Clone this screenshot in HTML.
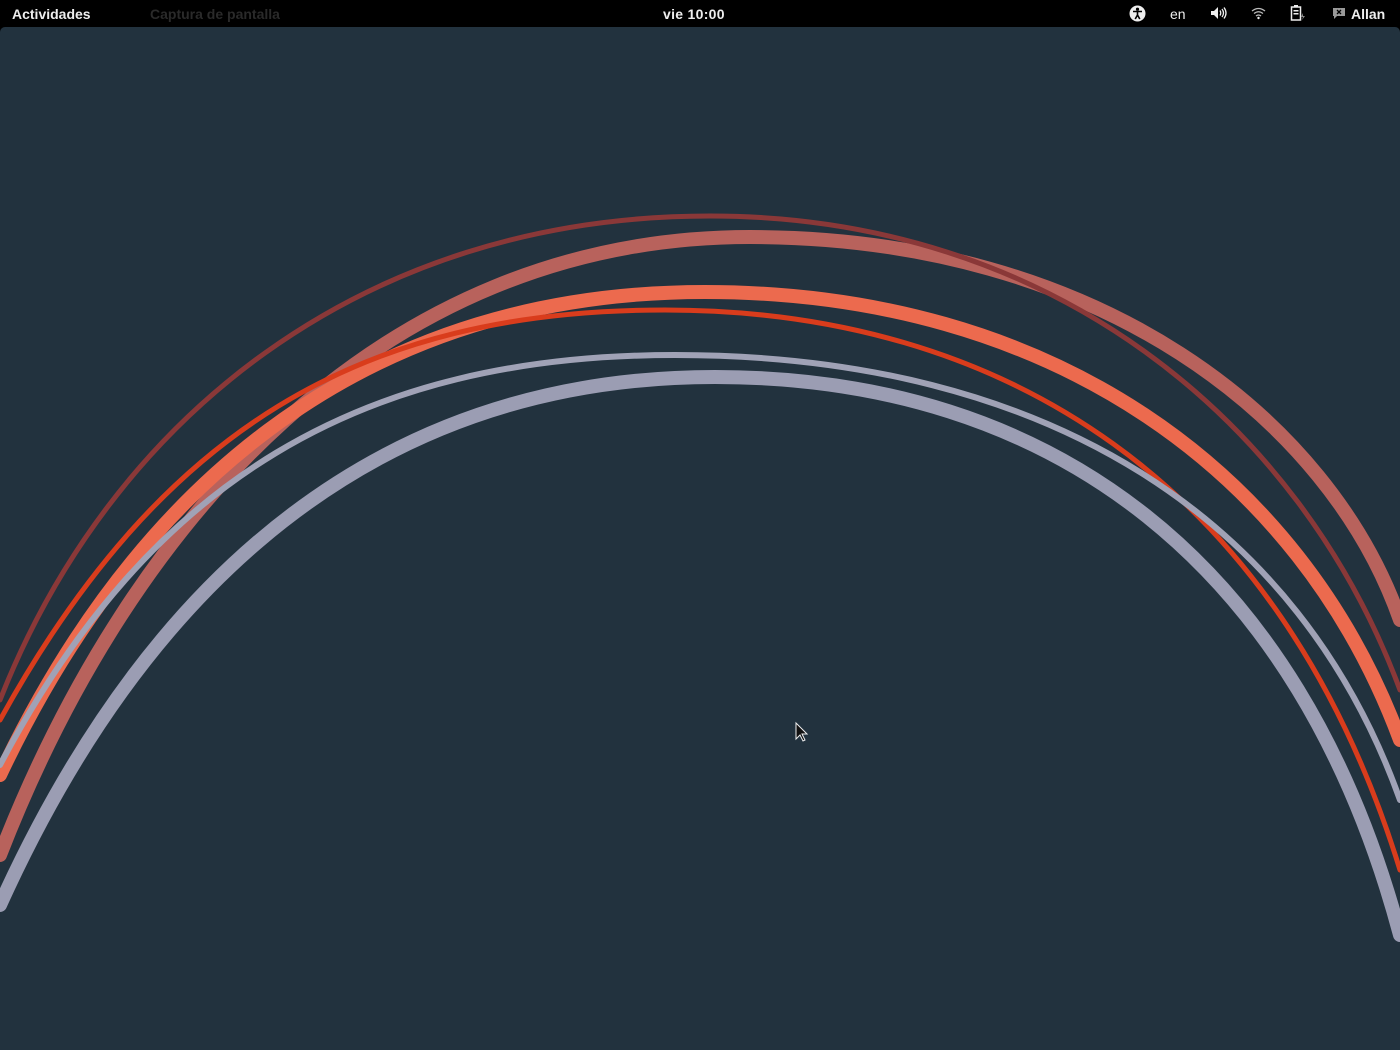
<!DOCTYPE html>
<html><head><meta charset="utf-8"><style>
html,body{margin:0;padding:0;width:1400px;height:1050px;overflow:hidden;background:#000;}
#bar{position:absolute;left:0;top:0;width:1400px;height:27px;background:#000;color:#eee;font-family:"Liberation Sans",sans-serif;font-size:14px;font-weight:bold;}
#bar span{position:absolute;top:6px;}
#desk{position:absolute;left:0;top:27px;width:1400px;height:1023px;background:#22323e;border-radius:5px 5px 0 0;overflow:hidden;}
svg{position:absolute;left:0;top:0}
</style></head><body>
<div id="bar">
<span style="left:12px">Actividades</span>
<span style="left:150px;color:#2a2a2a">Captura de pantalla</span>
<span style="left:663px;letter-spacing:0.3px">vie 10:00</span>
<svg style="left:1129px;top:5px" width="17" height="17" viewBox="0 0 17 17"><circle cx="8.5" cy="8.5" r="8" fill="#eee"/><circle cx="8.5" cy="4.2" r="1.6" fill="#000"/><path d="M4 6.5h9M8.5 6.5v4M8.5 10l-2.3 4M8.5 10l2.3 4" stroke="#000" stroke-width="1.6" fill="none"/></svg>
<span style="left:1170px;font-weight:normal">en</span>
<svg style="left:1210px;top:6px" width="17" height="14" viewBox="0 0 17 14"><path d="M1 5h3l4-4v12l-4-4H1z" fill="#eee"/><path d="M10 4.5q1.5 2.5 0 5M12 3q3 4 0 8M14 1.5q4 5.5 0 11" stroke="#eee" stroke-width="1.3" fill="none"/></svg>
<svg style="left:1251px;top:6px" width="15" height="14" viewBox="0 0 15 14"><path d="M1 5q6.5-5 13 0M3 7.5q4.5-3.5 9 0M5 10q2.5-2 5 0" stroke="#bbb" stroke-width="1.3" fill="none"/><circle cx="7.5" cy="12" r="1.2" fill="#eee"/></svg>
<svg style="left:1290px;top:4px" width="16" height="18" viewBox="0 0 16 18"><rect x="1.5" y="3" width="9" height="13" fill="none" stroke="#eee" stroke-width="1.5"/><rect x="4" y="1" width="4" height="2" fill="#eee"/><rect x="3.5" y="6" width="5" height="1.5" fill="#eee"/><rect x="3.5" y="9" width="5" height="1.5" fill="#eee"/><path d="M13 9l-2 4h2l-1 3 3-4h-2z" fill="#888"/></svg>
<svg style="left:1332px;top:7px" width="14" height="12" viewBox="0 0 14 12"><path d="M1 1h12v8H5l-3 3V9H1z" fill="#999"/><path d="M5 3l4 4M9 3l-4 4" stroke="#000" stroke-width="1.3"/></svg>
<span style="left:1351px">Allan</span>
</div>
<div id="desk">
<svg width="1400" height="1023" viewBox="0 27 1400 1023">
<g fill="none" stroke-linecap="round">
<path d="M0,855 C130,520 380,237 750,237 C1100,237 1330,420 1400,620" stroke="#b8625c" stroke-width="14"/>
<path d="M0,700 C110,420 360,216 710,216 C1050,216 1300,420 1400,690" stroke="#8a3838" stroke-width="5"/>
<path d="M0,775 C130,500 350,292 705,292 C1050,292 1300,470 1400,740" stroke="#ec6a4e" stroke-width="14"/>
<path d="M0,720 C160,430 360,310 665,310 C1000,310 1280,480 1400,870" stroke="#d93c1c" stroke-width="5"/>
<path d="M0,765 C150,480 360,355 675,355 C1050,355 1300,520 1400,800" stroke="#a0a2b6" stroke-width="6"/>
<path d="M0,905 C120,640 330,377 715,377 C1050,377 1300,560 1400,935" stroke="#9b9db3" stroke-width="14"/>
</g>
<path d="M796,723v16l4-4 3 6 2-1-3-6h5z" fill="#111" stroke="#eee" stroke-width="1"/>
</svg>
</div>
</body></html>
